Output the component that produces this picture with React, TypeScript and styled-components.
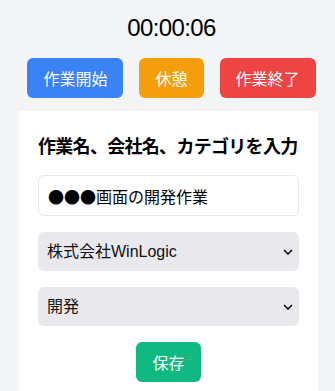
import React, { FC, useState } from "react";
import styled, { createGlobalStyle } from "styled-components";

const GlobalStyle = createGlobalStyle`
  html, body {
    margin: 0;
    padding: 0;
    background: #f3f4f6;
    font-family: "Liberation Sans", "Noto Sans CJK JP", sans-serif;
    color: #111;
  }
`;

const Page = styled.div`
  min-height: 391px;
  padding-top: 12px;
`;

const TopSection = styled.div`
  display: flex;
  flex-direction: column;
  align-items: center;
  padding-left: 8px;
`;

const Timer = styled.div`
  font-family: "Liberation Sans", sans-serif;
  font-size: 24px;
  line-height: 32px;
  letter-spacing: -0.6px;
  color: #000;
`;

const ButtonRow = styled.div`
  display: flex;
  gap: 16px;
  margin-top: 14px;
`;

interface IActionButtonProps {
  bg: string;
}
const ActionButton = styled.button<IActionButtonProps>`
  height: 40px;
  padding: 0 16px;
  border: none;
  border-radius: 6px;
  background: ${({ bg }): string => bg};
  color: #fff;
  font-family: "Noto Sans CJK JP", sans-serif;
  font-size: 16px;
  line-height: 24px;
  cursor: pointer;
`;

const Card = styled.div`
  margin: 13px 17px 0 19px;
  padding: 20px 19px 12px;
  background: #fff;
  display: flex;
  flex-direction: column;
  gap: 16px;
`;

const Heading = styled.h2`
  margin: 0;
  font-family: "Noto Sans CJK JP", sans-serif;
  font-size: 18px;
  line-height: 28px;
  font-weight: 700;
  letter-spacing: -0.7px;
  color: #000;
`;

const TextInput = styled.input`
  box-sizing: border-box;
  width: 100%;
  height: 41px;
  padding: 0 9px;
  border: 1px solid #e5e7eb;
  border-radius: 6px;
  font-family: "Noto Sans CJK JP", sans-serif;
  font-size: 16px;
  color: #000;
  outline: none;
`;

const SelectWrapper = styled.div`
  position: relative;
  width: 100%;
`;

const Select = styled.select`
  box-sizing: border-box;
  width: 100%;
  height: 39px;
  padding: 0 28px 0 9px;
  border: none;
  border-radius: 6px;
  background: #e9e9ed;
  appearance: none;
  font-family: "Liberation Sans", "Noto Sans CJK JP", sans-serif;
  font-size: 16px;
  color: #111;
  outline: none;
`;

const Chevron = styled.svg`
  position: absolute;
  right: 6px;
  top: 50%;
  transform: translateY(-50%);
  pointer-events: none;
`;

const SaveRow = styled.div`
  display: flex;
  justify-content: center;
`;

const Dropdown: FC<{ value: string; options: string[] }> = ({ value, options }) => {
  const [current, setCurrent] = useState(value);
  return (
    <SelectWrapper>
      <Select value={current} onChange={(e) => setCurrent(e.target.value)}>
        {options.map((o) => (
          <option key={o} value={o}>
            {o}
          </option>
        ))}
      </Select>
      <Chevron width="10" height="6" viewBox="0 0 10 6">
        <path d="M1 1 L5 5 L9 1" fill="none" stroke="#111" strokeWidth="1.6" />
      </Chevron>
    </SelectWrapper>
  );
};

const App: FC = () => {
  const [taskName, setTaskName] = useState("●●●画面の開発作業");

  return (
    <Page>
      <GlobalStyle />
      <TopSection>
        <Timer>00:00:06</Timer>
        <ButtonRow>
          <ActionButton bg="#3b82f6">作業開始</ActionButton>
          <ActionButton bg="#f59e0b">休憩</ActionButton>
          <ActionButton bg="#ef4444">作業終了</ActionButton>
        </ButtonRow>
      </TopSection>
      <Card>
        <Heading>作業名、会社名、カテゴリを入力</Heading>
        <TextInput value={taskName} onChange={(e) => setTaskName(e.target.value)} />
        <Dropdown value="株式会社WinLogic" options={["株式会社WinLogic"]} />
        <Dropdown value="開発" options={["開発", "デザイン", "会議"]} />
        <SaveRow>
          <ActionButton bg="#10b981">保存</ActionButton>
        </SaveRow>
      </Card>
    </Page>
  );
};

export default App;
